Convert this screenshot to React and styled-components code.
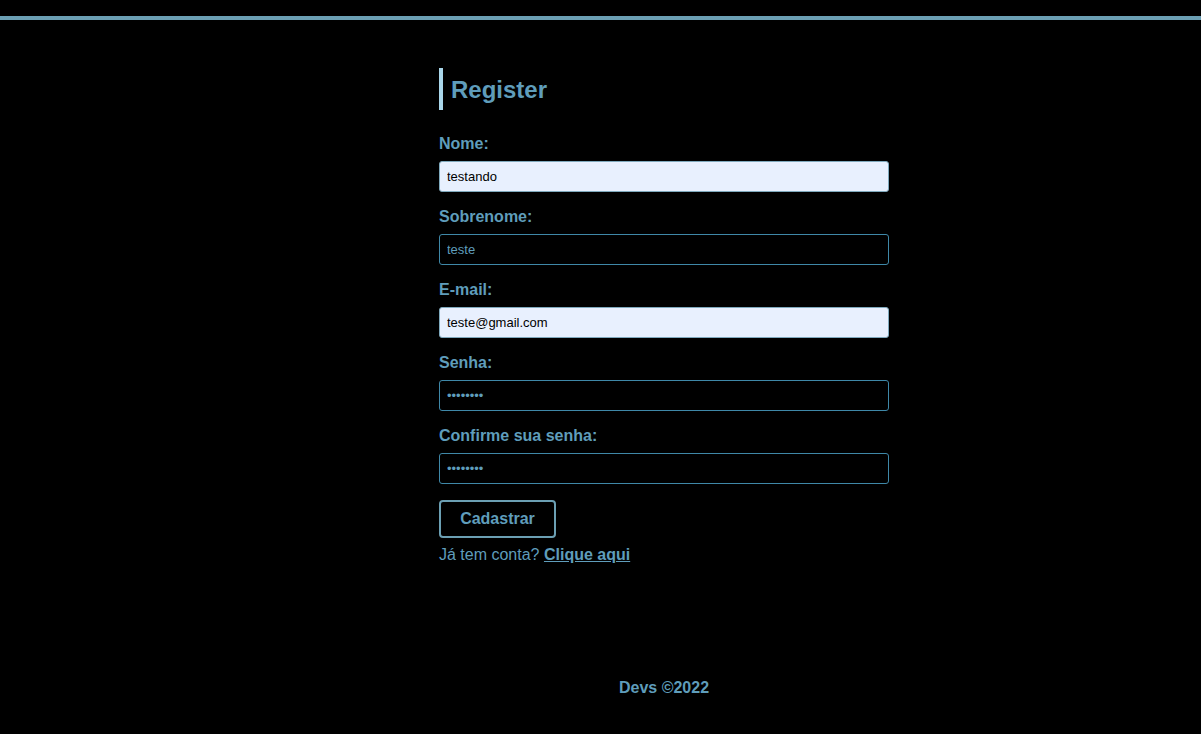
import React from 'react';
import styled, { createGlobalStyle } from 'styled-components';

const Global = createGlobalStyle`
  html, body {
    margin: 0;
    padding: 0;
    background: #000;
    font-family: "Liberation Sans", Arial, sans-serif;
  }
`;

const Page = styled.div`
  min-height: 734px;
  background: #000;
  display: flex;
  flex-direction: column;
`;

const TopBar = styled.div`
  height: 16px;
  border-bottom: 4px solid #6b9fb3;
`;

const Main = styled.main`
  flex: 1;
  display: flex;
  flex-direction: column;
  align-items: center;
  padding-left: 127px;
`;

const Form = styled.form`
  width: 450px;
  margin-top: 48px;
  display: flex;
  flex-direction: column;
`;

const Title = styled.h1`
  margin: 0 0 24px;
  border-left: 4px solid #a9d6ea;
  padding: 1px 0 0 8px;
  height: 41px;
  font-size: 24px;
  line-height: 42px;
  font-weight: bold;
  color: #5f9dbb;
`;

const Field = styled.div`
  display: flex;
  flex-direction: column;
  margin-bottom: 15px;
`;

const Label = styled.label`
  font-size: 16px;
  line-height: 18px;
  font-weight: bold;
  color: #5f9dbb;
  padding-top: 1px;
  margin-bottom: 8px;
`;

const Input = styled.input`
  box-sizing: border-box;
  height: 31px;
  width: 100%;
  padding: 0 7px;
  border: 1px solid ${({ $filled }) => ($filled ? '#7fa9bd' : '#3f88a8')};
  border-radius: 3px;
  background: ${({ $filled }) => ($filled ? '#e8f0fe' : '#000')};
  color: ${({ $filled }) => ($filled ? '#000' : '#5f9dbb')};
  font-family: "Liberation Sans", Arial, sans-serif;
  font-size: 13px;
  outline: none;
`;

const Button = styled.button`
  align-self: flex-start;
  margin-top: 1px;
  width: 117px;
  height: 38px;
  background: transparent;
  border: 2px solid #6b9fb3;
  border-radius: 4px;
  color: #5f9dbb;
  font-family: "Liberation Sans", Arial, sans-serif;
  font-size: 16px;
  font-weight: bold;
`;

const Hint = styled.p`
  margin: 8px 0 0;
  font-size: 16px;
  line-height: 18px;
  color: #5f9dbb;

  a {
    color: #5f9dbb;
    font-weight: bold;
    text-decoration: underline;
  }
`;

const Footer = styled.footer`
  padding-left: 127px;
  height: 55px;
  display: flex;
  justify-content: center;
  align-items: flex-start;
  font-size: 16px;
  line-height: 18px;
  font-weight: bold;
  color: #5f9dbb;
`;

const fields = [
  { label: 'Nome:', value: 'testando', type: 'text', filled: true },
  { label: 'Sobrenome:', value: 'teste', type: 'text' },
  { label: 'E-mail:', value: 'teste@gmail.com', type: 'email', filled: true },
  { label: 'Senha:', value: '12345678', type: 'password' },
  { label: 'Confirme sua senha:', value: '12345678', type: 'password' },
];

export default function App() {
  return (
    <Page>
      <Global />
      <TopBar />
      <Main>
        <Form onSubmit={(e) => e.preventDefault()}>
          <Title>Register</Title>
          {fields.map((f) => (
            <Field key={f.label}>
              <Label>{f.label}</Label>
              <Input type={f.type} defaultValue={f.value} $filled={f.filled} />
            </Field>
          ))}
          <Button type="submit">Cadastrar</Button>
          <Hint>
            Já tem conta? <a href="#">Clique aqui</a>
          </Hint>
        </Form>
      </Main>
      <Footer>Devs ©2022</Footer>
    </Page>
  );
}
